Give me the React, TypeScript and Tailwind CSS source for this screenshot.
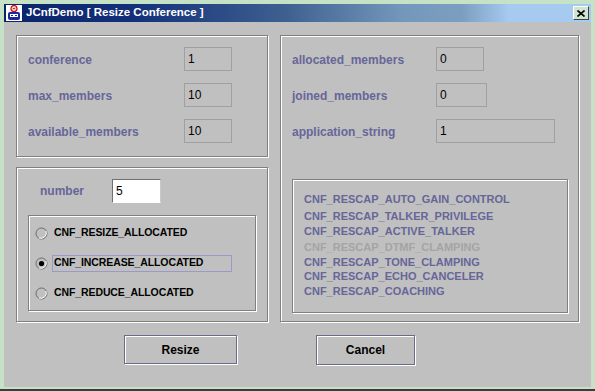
import { useState } from 'react';

const font = "font-['Liberation_Sans',Arial,sans-serif]";
const etched = 'border border-[#808080] shadow-[inset_1px_1px_0_#ffffff,1px_1px_0_#ffffff]';

const Field = ({ value, w }: { value: string; w: string }) => (
  <div className={`${w} h-[24px] border border-[#a0a0a0] flex items-center pl-[3px] text-[12px] text-black`}>
    {value}
  </div>
);

const Radio = ({ checked }: { checked: boolean }) => (
  <svg width="13" height="13" viewBox="0 0 13 13" className="shrink-0">
    <circle cx="6.5" cy="6.5" r="5.5" fill="#c0c0c0" stroke="#6a6a6a" strokeWidth="1" />
    <path d="M11 4 A5.5 5.5 0 0 1 4 11" fill="none" stroke="#ffffff" strokeWidth="1" />
    {checked && <circle cx="6.5" cy="6.5" r="2.6" fill="#000000" />}
  </svg>
);

const WindowIcon = () => (
  <svg width="16" height="16" viewBox="0 0 16 16">
    <rect x="0" y="0" width="16" height="16" fill="#ffffff" />
    <circle cx="8" cy="3.5" r="3" fill="none" stroke="#d01010" strokeWidth="1.3" />
    <path d="M6.5 3 L9.5 4 M7 4.5 L9 2.5" stroke="#d01010" strokeWidth="1" />
    <rect x="2" y="7" width="12" height="8" rx="2" fill="#1a2a9a" />
    <rect x="4" y="9" width="8" height="3" fill="#ffffff" />
    <rect x="5" y="10" width="2" height="1" fill="#1a2a9a" />
    <rect x="9" y="10" width="2" height="1" fill="#1a2a9a" />
  </svg>
);

const capabilities = [
  { name: 'CNF_RESCAP_AUTO_GAIN_CONTROL', h: 'h-[17px]', on: true },
  { name: 'CNF_RESCAP_TALKER_PRIVILEGE', h: 'h-[16px]', on: true },
  { name: 'CNF_RESCAP_ACTIVE_TALKER', h: 'h-[15px]', on: true },
  { name: 'CNF_RESCAP_DTMF_CLAMPING', h: 'h-[16px]', on: false },
  { name: 'CNF_RESCAP_TONE_CLAMPING', h: 'h-[14px]', on: true },
  { name: 'CNF_RESCAP_ECHO_CANCELER', h: 'h-[15px]', on: true },
  { name: 'CNF_RESCAP_COACHING', h: 'h-[15px]', on: true },
];

const modes = ['CNF_RESIZE_ALLOCATED', 'CNF_INCREASE_ALLOCATED', 'CNF_REDUCE_ALLOCATED'];

export default function App() {
  const [mode, setMode] = useState(1);

  return (
    <div className={`w-[595px] h-[391px] flex flex-col bg-[#c6e2c6] px-[4px] pt-[4px] border-b-2 border-[#3c3c3c] ${font}`}>
      <div className="h-[18px] flex items-center bg-[linear-gradient(to_right,#0a246a_0%,#14307a_22%,#3e6090_48%,#7498bc_68%,#7b9ec0_78%,#a6caf0_86%,#a6caf0_100%)]">
        <div className="ml-[2px]">
          <WindowIcon />
        </div>
        <span className="ml-[4px] text-[11.5px] font-bold text-white whitespace-nowrap">JCnfDemo [ Resize Conference ]</span>
        <div className="ml-auto mr-[2px] w-[16px] h-[14px] bg-[#d0e4d0] border border-t-white border-l-white border-r-[#404040] border-b-[#404040] flex items-center justify-center">
          <svg width="8" height="7" viewBox="0 0 8 7">
            <path d="M0.5 0.5 L7.5 6.5 M7.5 0.5 L0.5 6.5" stroke="#000000" strokeWidth="1.6" />
          </svg>
        </div>
      </div>

      <div className="flex-1 bg-[#c0c0c0] pt-[13px] pl-[12px] mb-[2px]">
        <div className="flex gap-[12px]">
          <div className="w-[252px] flex flex-col gap-[10px]">
            <div className={`h-[122px] ${etched} pl-[11px] pt-[11px] flex flex-col gap-[12px]`}>
              {[
                ['conference', '1'],
                ['max_members', '10'],
                ['available_members', '10'],
              ].map(([label, value]) => (
                <div key={label} className="flex items-center h-[24px]">
                  <span className="w-[156px] pt-[2px] text-[12px] font-bold text-[#666699]">{label}</span>
                  <Field value={value} w="w-[48px]" />
                </div>
              ))}
            </div>

            <div className={`h-[155px] ${etched} pl-[11px] pt-[11px]`}>
              <div className="flex items-center h-[24px]">
                <span className="w-[84px] pl-[12px] text-[12px] font-bold text-[#666699]">number</span>
                <div className="w-[49px] h-[24px] bg-white border border-t-[#707070] border-l-[#707070] border-r-[#c8c8c8] border-b-white flex items-center pl-[3px] text-[12px] text-black">
                  5
                </div>
              </div>
              <div className={`mt-[12px] w-[228px] h-[96px] ${etched} pt-[2px]`}>
                {modes.map((m, i) => (
                  <div key={m} className="h-[30px] flex items-center pl-[6px] cursor-default" onClick={() => setMode(i)}>
                    <Radio checked={mode === i} />
                    <span
                      className={`ml-[4px] h-[17px] flex items-center pl-[1px] pr-[6px] text-[10.5px] font-bold text-black tracking-[-0.1px] border ${
                        mode === i ? 'w-[180px] border-[#9999cc]' : 'border-transparent'
                      }`}
                    >
                      {m}
                    </span>
                  </div>
                ))}
              </div>
            </div>
          </div>

          <div className={`w-[299px] h-[287px] ${etched} pl-[11px] pt-[11px]`}>
            <div className="flex flex-col gap-[12px]">
              <div className="flex items-center h-[24px]">
                <span className="w-[144px] pt-[2px] text-[12px] font-bold text-[#666699]">allocated_members</span>
                <Field value="0" w="w-[48px]" />
              </div>
              <div className="flex items-center h-[24px]">
                <span className="w-[144px] pt-[2px] text-[12px] font-bold text-[#666699]">joined_members</span>
                <Field value="0" w="w-[51px]" />
              </div>
              <div className="flex items-center h-[24px]">
                <span className="w-[144px] pt-[2px] text-[12px] font-bold text-[#666699]">application_string</span>
                <Field value="1" w="w-[119px]" />
              </div>
            </div>
            <div className={`mt-[36px] w-[276px] h-[134px] ${etched} pl-[11px] pt-[11px]`}>
              {capabilities.map((c) => (
                <div
                  key={c.name}
                  className={`${c.h} flex items-center text-[11px] font-bold ${c.on ? 'text-[#666699]' : 'text-[#a4a4a4]'}`}
                >
                  {c.name}
                </div>
              ))}
            </div>
          </div>
        </div>

        <div className="mt-[13px] pl-[108px] flex items-start gap-[79px]">
          <button className="w-[113px] h-[29px] border border-[#6a6a8a] shadow-[inset_1px_1px_0_#ffffff,1px_1px_0_#ffffff] text-[12px] font-bold text-black">
            Resize
          </button>
          <button className="w-[99px] h-[30px] border border-[#6a6a8a] shadow-[inset_1px_1px_0_#ffffff,1px_1px_0_#ffffff] text-[12px] font-bold text-black">
            Cancel
          </button>
        </div>
      </div>
    </div>
  );
}
